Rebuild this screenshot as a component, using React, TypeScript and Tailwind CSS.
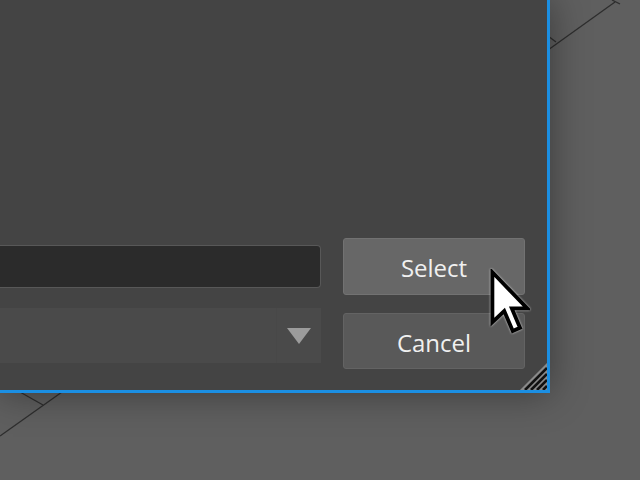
import React from "react";

function Cursor() {
  return (
    <svg
      aria-hidden="true"
      className="pointer-events-none absolute left-[489px] top-[269px] drop-shadow-[0_0_1px_rgba(255,255,255,0.8)]"
      width="41"
      height="67"
      viewBox="0 0 12.4 20.4"
    >
      <path
        d="M1 1 L1 16.2 L4.6 12.8 L7.2 18.9 L9.4 17.9 L6.9 12 L11.6 12 Z"
        fill="#ffffff"
        stroke="#000000"
        strokeWidth="1.15"
        strokeLinejoin="miter"
      />
    </svg>
  );
}

function ResizeGrip() {
  return (
    <svg
      aria-hidden="true"
      className="absolute bottom-0 right-0"
      width="27"
      height="27"
      viewBox="0 0 27 27"
    >
      <polygon points="27,0 27,27 0,27" fill="#8a8a8a" />
      {[7, 13, 19, 25].map((o) => (
        <line
          key={o}
          x1={27}
          y1={o - 2}
          x2={o - 2}
          y2={27}
          stroke="#111"
          strokeWidth="2.6"
        />
      ))}
    </svg>
  );
}

function ViewportLines() {
  return (
    <svg
      aria-hidden="true"
      className="absolute inset-0"
      width="640"
      height="480"
      viewBox="0 0 640 480"
    >
      <g stroke="#2e2e2e" strokeWidth="1.3" fill="none">
        <path d="M548 50 L615 2" />
        <path d="M548 36 L556 42" />
        <path d="M612 0 L620 4" />
        <path d="M0 436 L62 392" />
        <path d="M20 392 L43 405" />
      </g>
    </svg>
  );
}

export default function App() {
  return (
    <div
      className="relative h-[480px] w-[640px] overflow-hidden bg-[#5f5f5f]"
      style={{ fontFamily: '"Open Sans", "Noto Sans", sans-serif' }}
    >
      <ViewportLines />
      <div className="relative flex h-[393px] w-[550px] flex-col justify-end border-b-[3px] border-r-[3px] border-[#1b8fe3] bg-[#444444] pb-[21px] pr-[22px] shadow-[0_0_36px_rgba(0,0,0,0.4)]">
        <div className="flex items-end gap-[22px]">
          <div className="mb-[6px] flex w-[321px] flex-col">
            <div className="h-[43px] rounded-r-[4px] border border-l-0 border-[#585858] bg-[#2b2b2b]" />
            <div className="mt-[20px] flex h-[55px] bg-[#4a4a4a]">
              <div className="flex-1" />
              <div className="flex w-[45px] items-center justify-center border-l border-[#484848]">
                <svg width="24" height="16" viewBox="0 0 24 16" aria-hidden="true">
                  <polygon points="0,0 24,0 12,16" fill="#9c9c9c" />
                </svg>
              </div>
            </div>
          </div>
          <div className="flex w-[182px] flex-col gap-[18px]">
            <button className="h-[57px] rounded-[3px] border border-[#727272] bg-[#676767] pt-[3px] text-[24px] text-[#f0f0f0]">
              Select
            </button>
            <button className="h-[56px] rounded-[3px] border border-[#636363] bg-[#595959] pt-[3px] text-[24px] text-[#f0f0f0]">
              Cancel
            </button>
          </div>
        </div>
        <ResizeGrip />
      </div>
      <Cursor />
    </div>
  );
}
